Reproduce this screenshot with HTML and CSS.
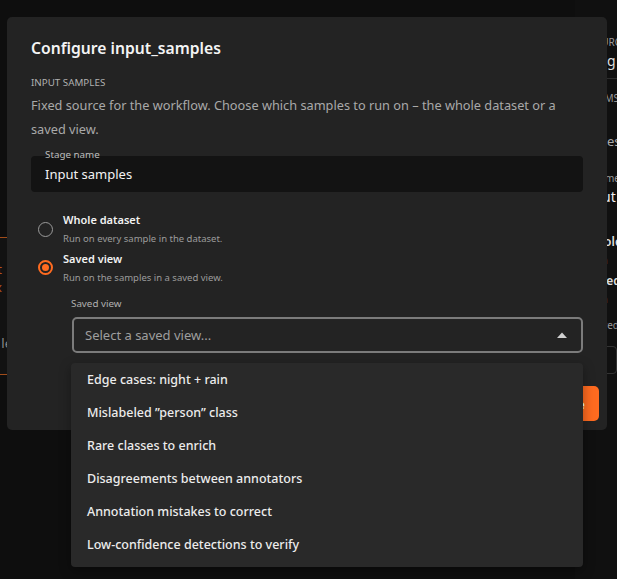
FILE: index.html
```html
<!DOCTYPE html>
<html lang="en">
<head>
<meta charset="utf-8">
<title>Configure input_samples</title>
<link rel="stylesheet" href="styles.css">
</head>
<body>
<div class="page">
  <div class="canvas">
    <div class="node">
      <div class="node-title">Input samples x</div>
      <div class="node-sub">Saved view le</div>
    </div>
  </div>
  <aside class="sidebar">
    <div class="sb-head">
      <div class="sb-kicker">SOURCE</div>
      <div class="sb-title">Running | Input</div>
    </div>
    <div class="sb-body">
      <div class="sb-kicker sb-params">PARAMS</div>
      <div class="sb-desc">Fixed so</div>
      <div class="sb-desc">samples es</div>
      <div class="sb-label sb-stage">Stage name</div>
      <div class="sb-value">Input s</div>
      <div class="sb-opt sb-opt-first">Whole</div>
      <div class="sb-optsub">Run</div>
      <div class="sb-opt">Saved</div>
      <div class="sb-optsub">Run</div>
      <div class="sb-label sb-saved">Saved</div>
      <div class="sb-box"></div>
    </div>
  </aside>
</div>

<div class="modal" role="dialog" aria-labelledby="dlg-title">
  <div class="modal-body">
    <h2 id="dlg-title" class="modal-title">Configure input_samples</h2>
    <div class="section-label">INPUT SAMPLES</div>
    <p class="section-desc">Fixed source for the workflow. Choose which samples to run on – the whole dataset or a saved view.</p>

    <div class="field">
      <span class="field-label">Stage name</span>
      <div class="field-value">Input samples</div>
    </div>

    <div class="radio-group">
      <div class="radio-row">
        <span class="radio"></span>
        <div class="radio-text">
          <div class="radio-label">Whole dataset</div>
          <div class="radio-sub">Run on every sample in the dataset.</div>
        </div>
      </div>
      <div class="radio-row">
        <span class="radio radio-checked"></span>
        <div class="radio-text">
          <div class="radio-label">Saved view</div>
          <div class="radio-sub">Run on the samples in a saved view.</div>
        </div>
      </div>
    </div>

    <div class="select-wrap">
      <div class="select-label">Saved view</div>
      <div class="select">
        <span class="select-placeholder">Select a saved view...</span>
        <svg class="caret" width="10" height="6" viewBox="0 0 10 6"><path d="M0 6 L5 0.5 L10 6 Z" fill="#d0d0d0"/></svg>
      </div>
    </div>
  </div>
  <div class="modal-actions">
    <button class="btn-primary">Save stage</button>
  </div>
</div>

<ul class="menu">
  <li class="menu-item">Edge cases: night + rain</li>
  <li class="menu-item">Mislabeled ”person” class</li>
  <li class="menu-item">Rare classes to enrich</li>
  <li class="menu-item">Disagreements between annotators</li>
  <li class="menu-item">Annotation mistakes to correct</li>
  <li class="menu-item">Low-confidence detections to verify</li>
</ul>
</body>
</html>
```

FILE: styles.css
```css
* { box-sizing: border-box; }
html, body { margin: 0; padding: 0; }
body {
  background: #0e0e0e;
  font-family: "Noto Sans", "Open Sans", sans-serif;
  color: #eee;
  width: 617px;
  height: 579px;
  overflow: hidden;
  position: relative;
}

/* background page */
.page {
  display: flex;
  height: 579px;
}
.canvas {
  flex: 1;
  position: relative;
  overflow: hidden;
}
.node {
  position: absolute;
  left: -80px;
  top: 237px;
  width: 140px;
  height: 138px;
  border-top: 1px solid #a04c1a;
  border-bottom: 1px solid #a04c1a;
  background: #121212;
  padding: 22px 8px 0 8px;
}
.node-title { color: #b4541c; font-size: 13px; text-align: right; padding-right: 50px; }
.node-sub { color: #8a8a8a; font-size: 13px; margin-top: 38px; padding-left: 3px; white-space: nowrap; }

.sidebar {
  width: 42px;
  background: #101010;
  overflow: hidden;
  white-space: nowrap;
  color: #ddd;
}
.sb-head {
  height: 79px;
  border-bottom: 1px solid #2c2c2c;
  padding: 35px 0 0 13px;
}
.sb-kicker { font-size: 10px; color: #999; line-height: 14px; }
.sb-title { font-size: 14px; line-height: 20px; margin-top: 2px; margin-left: -28px; }
.sb-body { padding-left: 22px; }
.sb-params { margin-top: 12px; margin-left: -17px; }
.sb-desc { font-size: 13px; color: #aaa; line-height: 24px; margin-left: -44px; }
.sb-label { font-size: 10px; color: #999; line-height: 14px; }
.sb-stage { margin-top: 18px; margin-left: -33px; }
.sb-value { font-size: 14px; color: #eee; line-height: 20px; margin-left: -17px; margin-top: 2px; }
.sb-opt { font-size: 12px; font-weight: 600; line-height: 18px; margin-left: -11px; }
.sb-opt-first { margin-top: 26px; margin-left: -12px; }
.sb-optsub { font-size: 10px; color: #999; line-height: 18px; margin-left: -8px; margin-bottom: 3px; }
.sb-saved { margin-top: 10px; margin-left: -6px; }
.sb-box {
  margin-top: 14px;
  height: 28px;
  border: 1px solid #333;
  border-radius: 4px;
  margin-left: -20px;
}

/* modal (overlay) */
.modal {
  position: absolute;
  left: 7px;
  top: 17px;
  width: 600px;
  height: 413px;
  background: #232323;
  border-radius: 5px;
  display: flex;
  flex-direction: column;
}
.modal-body {
  padding: 19px 24px 0 24px;
}
.modal-title {
  margin: 0;
  font-size: 15.7px;
  font-weight: 600;
  line-height: 24px;
  color: #f4f4f4;
}
.section-label {
  margin-top: 15px;
  font-size: 9.8px;
  line-height: 16px;
  color: #b0b0b0;
}
.section-desc {
  margin: 3px 0 0 0;
  font-size: 12.75px;
  line-height: 23.5px;
  color: #a9a9a9;
}
.field {
  position: relative;
  margin-top: 15px;
  height: 36px;
  background: #131313;
  border-radius: 4px;
  padding: 8px 14px;
}
.field-label {
  position: absolute;
  left: 14px;
  top: -8px;
  font-size: 9.8px;
  line-height: 14px;
  color: #bdbdbd;
}
.field-value {
  font-size: 13px;
  line-height: 20px;
  color: #f2f2f2;
}

.radio-group {
  margin-top: 18px;
  padding-left: 7px;
  display: flex;
  flex-direction: column;
}
.radio-row {
  display: flex;
  align-items: center;
  gap: 10px;
  height: 38.5px;
}
.radio {
  width: 15px;
  height: 15px;
  border-radius: 50%;
  border: 1.5px solid #9a9a9a;
  flex: none;
  display: flex;
  align-items: center;
  justify-content: center;
}
.radio-checked {
  border: 2px solid #ff6b20;
}
.radio-checked::after {
  content: "";
  width: 7px;
  height: 7px;
  border-radius: 50%;
  background: #ff6b20;
}
.radio-label {
  font-size: 11px;
  font-weight: 600;
  line-height: 19px;
  color: #f2f2f2;
}
.radio-sub {
  font-size: 9.5px;
  line-height: 19px;
  color: #9c9c9c;
}

.select-wrap {
  margin-top: 10px;
  padding-left: 41px;
}
.select-label {
  font-size: 9.8px;
  line-height: 14px;
  color: #b0b0b0;
  margin-left: -1px;
}
.select {
  margin-top: 6px;
  height: 36px;
  border: 2px solid #7b7b7b;
  border-radius: 5px;
  display: flex;
  align-items: center;
  justify-content: space-between;
  padding: 0 14px 0 11px;
}
.select-placeholder {
  font-size: 13px;
  color: #9e9e9e;
}
.caret { display: block; }

.modal-actions {
  margin-top: auto;
  display: flex;
  justify-content: flex-end;
  padding: 0 8px 9px 0;
}
.btn-primary {
  height: 35px;
  width: 96px;
  border: none;
  border-radius: 5px;
  background: #ff6b20;
  color: #fff;
  font-family: inherit;
  font-size: 13px;
  font-weight: 600;
}

/* dropdown menu (popover) */
.menu {
  position: absolute;
  left: 71px;
  top: 363px;
  width: 512px;
  margin: 0;
  padding: 0 0 6px 0;
  list-style: none;
  background: #292929;
  border-radius: 4px;
  box-shadow: 0 4px 12px rgba(0,0,0,0.35);
}
.menu-item {
  height: 33px;
  line-height: 33px;
  padding-left: 16px;
  font-size: 12.5px;
  font-weight: 500;
  color: #ececec;
}
```
